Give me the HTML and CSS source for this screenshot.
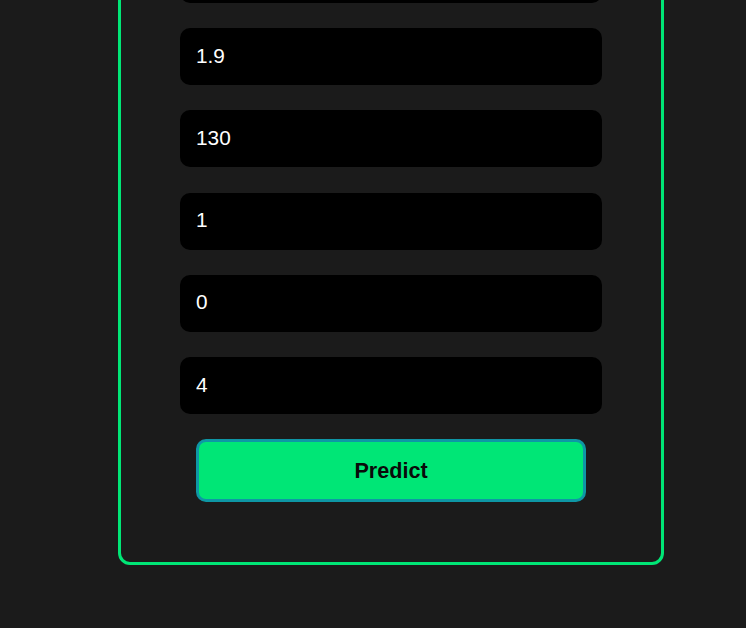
FILE: index.html
```html
<!DOCTYPE html>
<html lang="en">
<head>
<meta charset="utf-8">
<title>Predict</title>
<link rel="stylesheet" href="styles.css">
</head>
<body>
<form class="card">
  <input class="field" type="text" value="">
  <input class="field" type="text" value="1.9">
  <input class="field" type="text" value="130">
  <input class="field" type="text" value="1">
  <input class="field" type="text" value="0">
  <input class="field" type="text" value="4">
  <button class="predict" type="button">Predict</button>
</form>
</body>
</html>
```
FILE: styles.css
```css
html, body {
  margin: 0;
  padding: 0;
  background: #1b1b1b;
  font-family: "Liberation Sans", Arial, sans-serif;
}
body {
  overflow: hidden;
  height: 628px;
}
.card {
  box-sizing: border-box;
  width: 546px;
  margin: -97.25px 0 0 118px;
  padding: 40px 0 60px;
  border: 3px solid #00e676;
  border-radius: 12px;
  background: #1b1b1b;
  display: flex;
  flex-direction: column;
  align-items: center;
  gap: 25.25px;
}
.field {
  box-sizing: border-box;
  width: 422px;
  height: 57px;
  margin: 0;
  padding: 0 16px 2px;
  border: none;
  border-radius: 10px;
  background: #000;
  color: #fff;
  font-family: "Liberation Sans", Arial, sans-serif;
  font-size: 20.8px;
  outline: none;
}
.predict {
  box-sizing: border-box;
  width: 390px;
  height: 63px;
  margin: 0;
  border: 3px solid #0e97a5;
  border-radius: 10px;
  background: #00e676;
  color: #0a0a0a;
  font-family: "Liberation Sans", Arial, sans-serif;
  font-weight: bold;
  font-size: 21.6px;
  cursor: pointer;
}
```
